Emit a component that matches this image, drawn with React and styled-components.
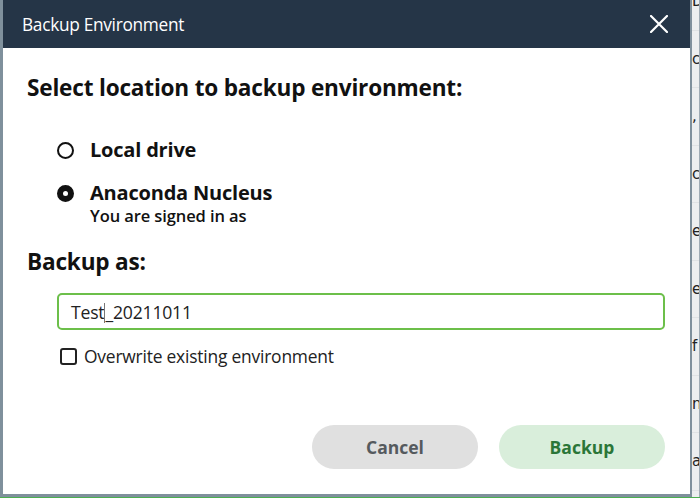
import React from "react"
import styled, { createGlobalStyle } from "styled-components"

const GlobalStyle = createGlobalStyle`
    html, body {
        margin: 0;
        padding: 0;
        background: #eef0f1;
        overflow: hidden;
    }
    body {
        font-family: "Open Sans", "Noto Sans", sans-serif;
    }
`

const colors = {
    NAVY: "#253547",
    FRAME: "#7f909c",
    GREEN: "#6cbf4a",
    TEXT: "#111111",
}

const Screen = styled.div`
    width: 700px;
    height: 498px;
    display: flex;
    border-bottom: 1px solid #4caf50;
    box-sizing: border-box;
`

const Dialog = styled.div`
    width: 692px;
    height: 497px;
    box-sizing: border-box;
    border-left: 3px solid ${colors.FRAME};
    border-right: 2px solid ${colors.FRAME};
    border-bottom: 3px solid ${colors.FRAME};
    background: white;
    display: flex;
    flex-direction: column;
`

const Header = styled.div`
    height: 48px;
    background: ${colors.NAVY};
    display: flex;
    align-items: center;
    justify-content: space-between;
    padding: 0 20px 0 19px;
    flex-shrink: 0;
`

const HeaderTitle = styled.span`
    color: white;
    font-size: 17.3px;
    letter-spacing: -0.3px;
`

const CloseButton = styled.button`
    border: none;
    background: none;
    padding: 0;
    width: 22px;
    height: 22px;
    display: flex;
    align-items: center;
    justify-content: center;
    cursor: pointer;
`

const Body = styled.div`
    flex: 1;
    display: flex;
    flex-direction: column;
    padding: 26px 25px 0 24px;
`

const Heading = styled.h1`
    margin: 0;
    font-size: 22.6px;
    font-weight: 700;
    color: ${colors.TEXT};
    line-height: 28px;
    letter-spacing: -0.2px;
`

const Options = styled.div`
    display: flex;
    flex-direction: column;
    gap: 17px;
    padding: 35px 0 0 30px;
`

const Option = styled.label`
    display: flex;
    align-items: flex-start;
    gap: 16px;
`

const Radio = styled.span`
    width: 17px;
    height: 17px;
    margin-top: 5px;
    border-radius: 50%;
    box-sizing: border-box;
    border: 2px solid #111;
    background: ${(p) => (p.checked ? "#111" : "white")};
    display: flex;
    align-items: center;
    justify-content: center;
    flex-shrink: 0;
    &::after {
        content: "";
        width: 5px;
        height: 5px;
        border-radius: 50%;
        background: white;
        display: ${(p) => (p.checked ? "block" : "none")};
    }
`

const OptionText = styled.div`
    display: flex;
    flex-direction: column;
`

const OptionLabel = styled.span`
    font-size: 20px;
    font-weight: 700;
    color: ${colors.TEXT};
    line-height: 26px;
    letter-spacing: -0.2px;
`

const OptionSub = styled.span`
    font-size: 16.5px;
    font-weight: 600;
    color: ${colors.TEXT};
    line-height: 20px;
    letter-spacing: -0.1px;
`

const SubHeading = styled(Heading)`
    margin-top: 22px;
`

const InputWrap = styled.div`
    margin: 17px 0 0 30px;
    height: 37px;
    box-sizing: border-box;
    border: 2px solid ${colors.GREEN};
    border-radius: 5px;
    display: flex;
    align-items: center;
    padding: 0 12px;
    font-size: 17.6px;
    color: #222;
    letter-spacing: -0.2px;
    cursor: text;
`

const Caret = styled.span`
    display: inline-block;
    width: 1px;
    height: 20px;
    background: #777;
    margin: 0 0 -4px;
`

const CheckRow = styled.label`
    display: flex;
    align-items: center;
    gap: 7px;
    height: 22px;
    margin: 15px 0 0 33px;
`

const CheckBox = styled.span`
    width: 17px;
    height: 17px;
    flex-shrink: 0;
    box-sizing: border-box;
    border: 2px solid #222;
    border-radius: 3px;
`

const CheckLabel = styled.span`
    font-size: 17.4px;
    color: #222;
    letter-spacing: -0.2px;
`

const Footer = styled.div`
    display: flex;
    justify-content: flex-end;
    gap: 21px;
    margin-top: 58px;
`

const Button = styled.button`
    width: 166px;
    height: 44px;
    border: none;
    border-radius: 22px;
    font-family: "Open Sans", "Noto Sans", sans-serif;
    font-size: 17.5px;
    font-weight: 700;
    background: ${(p) => (p.primary ? "#d9eedb" : "#e0e0e0")};
    color: ${(p) => (p.primary ? "#2b7638" : "#555a5e")};
    cursor: pointer;
`

const Behind = styled.div`
    flex: 1;
    background: #eceeef;
    border-right: 1px solid #9fabb4;
    display: flex;
    flex-direction: column;
    overflow: hidden;
    font-family: "DejaVu Sans", sans-serif;
    font-size: 15px;
    color: #222;
`

const BehindLine = styled.span`
    height: 57.5px;
    line-height: 57.5px;
    flex-shrink: 0;
    border-bottom: 1px solid #dfe2e4;
    box-sizing: border-box;
    &:first-child {
        margin-top: -27px;
    }
`

const behindLetters = ["D", "c", ",", "c", "e", "e", "f", "n", "a", "s"]

export default function App() {
    return (
        <>
            <GlobalStyle />
            <Screen>
                <Dialog>
                    <Header>
                        <HeaderTitle>Backup Environment</HeaderTitle>
                        <CloseButton aria-label="Close">
                            <svg width="18" height="18" viewBox="0 0 18 18">
                                <path d="M1 1 L17 17 M17 1 L1 17" stroke="white" strokeWidth="2.2" strokeLinecap="round" />
                            </svg>
                        </CloseButton>
                    </Header>
                    <Body>
                        <Heading>Select location to backup environment:</Heading>
                        <Options>
                            <Option>
                                <Radio />
                                <OptionText>
                                    <OptionLabel>Local drive</OptionLabel>
                                </OptionText>
                            </Option>
                            <Option>
                                <Radio checked />
                                <OptionText>
                                    <OptionLabel>Anaconda Nucleus</OptionLabel>
                                    <OptionSub>You are signed in as</OptionSub>
                                </OptionText>
                            </Option>
                        </Options>
                        <SubHeading>Backup as:</SubHeading>
                        <InputWrap>
                            <span>
                                Test
                                <Caret />
                                _20211011
                            </span>
                        </InputWrap>
                        <CheckRow>
                            <CheckBox />
                            <CheckLabel>Overwrite existing environment</CheckLabel>
                        </CheckRow>
                        <Footer>
                            <Button>Cancel</Button>
                            <Button primary>Backup</Button>
                        </Footer>
                    </Body>
                </Dialog>
                <Behind>
                    {behindLetters.map((l, i) => (
                        <BehindLine key={i}>{l}</BehindLine>
                    ))}
                </Behind>
            </Screen>
        </>
    )
}
